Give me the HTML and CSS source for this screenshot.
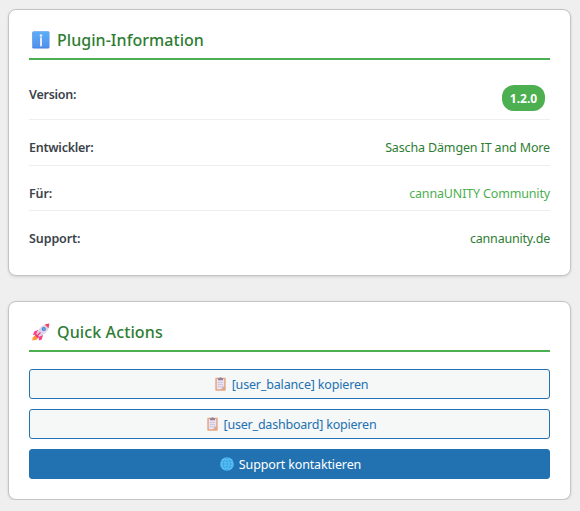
FILE: index.html
```html
<!DOCTYPE html>
<html lang="de">
<head>
<meta charset="utf-8">
<title>Plugin-Information</title>
<link rel="stylesheet" href="styles.css">
</head>
<body>
<section class="card info">
  <h2>
    <svg class="icon" viewBox="0 0 18 18"><defs><linearGradient id="tile" x1="0" y1="0" x2="0" y2="1"><stop offset="0" stop-color="#5caefa"/><stop offset="1" stop-color="#5092ec"/></linearGradient></defs><rect x=".3" y=".5" width="17" height="17" rx="1.3" fill="#477fd8"/><rect x="1" y=".5" width="16.3" height="16" rx="1" fill="url(#tile)"/><circle cx="9" cy="4.6" r="1.3" fill="#f1e9fa"/><path d="M9 7.3v7.2" stroke="#f1e9fa" stroke-width="2" stroke-linecap="round"/></svg>
    <span class="t-info">Plugin-Information</span>
  </h2>
  <dl>
    <div class="row first"><dt class="k-version">Version:</dt><dd class="badge"><span>1.2.0</span></dd></div>
    <div class="row"><dt class="k-dev">Entwickler:</dt><dd class="v-dev">Sascha Dämgen IT and More</dd></div>
    <div class="row short"><dt class="k-for">Für:</dt><dd class="v-for">cannaUNITY Community</dd></div>
    <div class="row last"><dt class="k-sup">Support:</dt><dd class="v-sup">cannaunity.de</dd></div>
  </dl>
</section>
<section class="card actions">
  <h2>
    <svg class="icon" viewBox="0 0 18 18"><path d="M6 7 2.200 8.500 1 12l4-.5zM11 12l-1.200 4.500-3 1L7 13z" fill="#f8418f"/><path d="M4 11.500.600 14.500.300 17.500 4.500 16.800 7 14z" fill="#ff9838"/><path d="M17.300.700C11.500.800 7.500 4 4.200 11L7 13.800C13.500 11 17.500 7 17.300.700z" fill="#ded3e9"/><path d="M17.300.600 12.800 1.500 16.500 5.200z" fill="#f83c62"/><path d="M3.800 10.500 7.500 14.200 5.500 15 3 12.500z" fill="#ee3c77"/><path d="M8.500 9.500 5 13" stroke="#ee3c77" stroke-width="1.300"/><circle cx="11.800" cy="6" r="2.100" fill="#4c7fb9"/><circle cx="11.800" cy="6" r="1.300" fill="#56a7f4"/></svg>
    <span class="t-actions">Quick Actions</span>
  </h2>
  <div class="buttons">
    <button class="btn"><svg class="clip" viewBox="0 0 11 14"><rect x=".3" y=".8" width="10.400" height="12.900" rx=".8" fill="#e3a683"/><path d="M1.800 2h7.400v7.500l-2.500 2.800H1.800z" fill="#ebe2f1"/><path d="M6.700 12.300V9.500h2.500z" fill="#bcabc8"/><path d="M3 5.500h5M3 7.500h5M3 9.500h3" stroke="#c0b4cc" stroke-width=".6"/><path d="M3 1.200h1.500a1 1 0 0 1 2 0H8v2H3z" fill="#8f8097"/></svg><span class="b-balance">[user_balance] kopieren</span></button>
    <button class="btn"><svg class="clip" viewBox="0 0 11 14"><rect x=".3" y=".8" width="10.400" height="12.900" rx=".8" fill="#e3a683"/><path d="M1.800 2h7.400v7.500l-2.500 2.800H1.800z" fill="#ebe2f1"/><path d="M6.700 12.300V9.500h2.500z" fill="#bcabc8"/><path d="M3 5.500h5M3 7.500h5M3 9.500h3" stroke="#c0b4cc" stroke-width=".6"/><path d="M3 1.200h1.500a1 1 0 0 1 2 0H8v2H3z" fill="#8f8097"/></svg><span class="b-dash">[user_dashboard] kopieren</span></button>
    <button class="btn primary"><svg class="globe" viewBox="0 0 14 14"><circle cx="7" cy="7" r="6.800" fill="#58c4fc"/><path d="M1.200 4.200h11.600M.500 7h13M1.200 9.800h11.600M7 .500v13" stroke="#2e8ccb" stroke-width=".5"/><ellipse cx="7" cy="7" rx="3.500" ry="6.400" fill="none" stroke="#2e8ccb" stroke-width=".5"/></svg><span class="b-support">Support kontaktieren</span></button>
  </div>
</section>
</body>
</html>
```
FILE: styles.css
```css
* { box-sizing: border-box; }
body {
  margin: 0;
  padding: 9px 9px 0 8px;
  background: #efefef;
  font: 12.5px/20px "Noto Sans", "Open Sans", sans-serif;
  overflow: hidden;
}
.card {
  background: #fff;
  border: 1px solid #c3c4c7;
  border-radius: 8px;
  padding: 0 20px;
  box-shadow: 0 1px 3px rgba(0, 0, 0, .12);
}
.info { height: 267px; margin-bottom: 25px; }
.actions { height: 199px; }
h2 {
  display: flex;
  align-items: center;
  height: 50px;
  margin: 0;
  padding: 12px 0 0 3px;
  border-bottom: 2px solid #4caf50;
  color: #2e7d32;
  font-size: 16px;
  font-weight: 500;
  line-height: 24px;
}
.icon { width: 18px; height: 18px; margin-right: 7px; }
.t-info { letter-spacing: .05px; }
.t-actions { letter-spacing: .12px; }
dl, dd { margin: 0; }
span, dt, dd { white-space: nowrap; }
.row {
  display: flex;
  justify-content: space-between;
  align-items: flex-start;
  height: 46px;
  padding-top: 18px;
  border-bottom: 1px solid #eee;
}
.row.first { height: 60px; padding-top: 25px; }
.row.short { height: 45px; }
.row.last { border: 0; }
dt { color: #3c434a; font-weight: 600; }
dd { color: #2e7d32; }
.k-version { letter-spacing: -.25px; }
.k-dev { letter-spacing: -.26px; }
.k-for { letter-spacing: -.15px; }
.k-sup { letter-spacing: -.1px; }
.v-dev { letter-spacing: -.14px; }
.v-for { color: #4caf50; letter-spacing: -.16px; }
.v-sup { letter-spacing: -.2px; }
.badge {
  width: 43px;
  height: 26px;
  margin-right: 5px;
  border-radius: 12px;
  background: #4caf50;
  color: #fff;
  font-size: 12px;
  font-weight: 700;
  line-height: 27px;
  text-align: center;
}
.buttons { display: grid; gap: 10px; padding-top: 17px; }
.btn {
  display: flex;
  justify-content: center;
  align-items: center;
  height: 30px;
  padding: 0 0 0 4px;
  border: 1px solid #2271b1;
  border-radius: 3px;
  background: #f6f7f7;
  color: #2271b1;
  font: 12.5px/20px "Noto Sans", "Open Sans", sans-serif;
}
.btn span { padding-top: 2px; }
.primary { background: #2271b1; color: #fff; padding-left: 2px; }
.clip { width: 11px; height: 14px; margin-right: 6px; }
.globe { width: 14px; height: 14px; margin-right: 5px; }
.b-balance { letter-spacing: -.17px; }
.b-dash { letter-spacing: -.21px; }
.b-support { letter-spacing: -.14px; }
```
